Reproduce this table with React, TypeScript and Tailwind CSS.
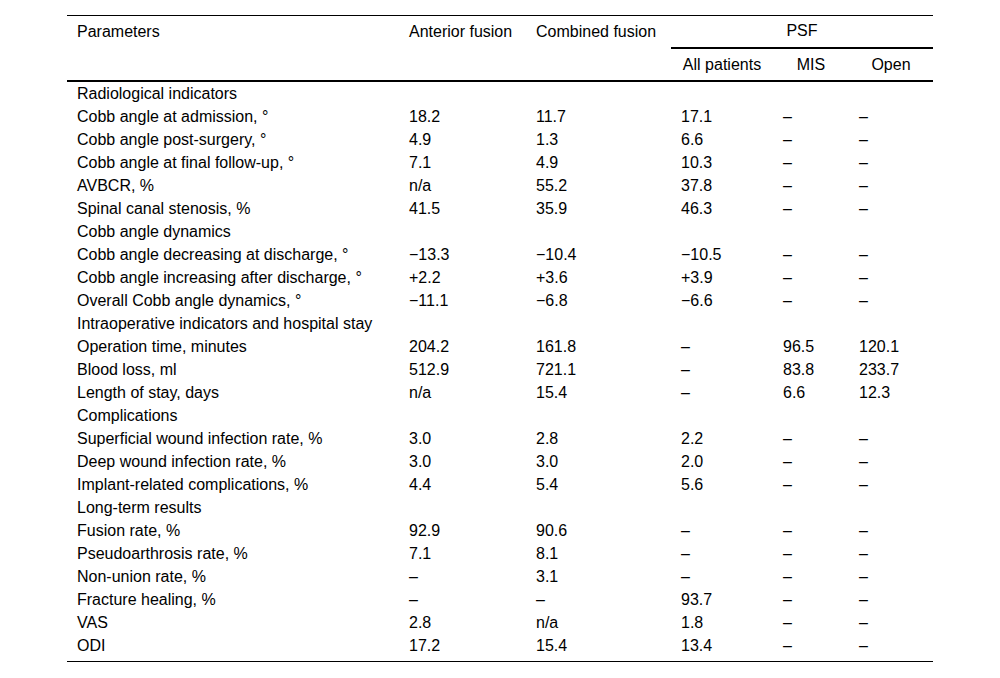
import React from "react";

// строки таблицы: [название, anterior, combined, all, mis, open] или заголовок раздела
type Row = { section: string } | { cells: string[] };

const rows: Row[] = [
  { section: "Radiological indicators" },
  { cells: ["Cobb angle at admission, °", "18.2", "11.7", "17.1", "–", "–"] },
  { cells: ["Cobb angle post-surgery, °", "4.9", "1.3", "6.6", "–", "–"] },
  { cells: ["Cobb angle at final follow-up, °", "7.1", "4.9", "10.3", "–", "–"] },
  { cells: ["AVBCR, %", "n/a", "55.2", "37.8", "–", "–"] },
  { cells: ["Spinal canal stenosis, %", "41.5", "35.9", "46.3", "–", "–"] },
  { section: "Cobb angle dynamics" },
  { cells: ["Cobb angle decreasing at discharge, °", "−13.3", "−10.4", "−10.5", "–", "–"] },
  { cells: ["Cobb angle increasing after discharge, °", "+2.2", "+3.6", "+3.9", "–", "–"] },
  { cells: ["Overall Cobb angle dynamics, °", "−11.1", "−6.8", "−6.6", "–", "–"] },
  { section: "Intraoperative indicators and hospital stay" },
  { cells: ["Operation time, minutes", "204.2", "161.8", "–", "96.5", "120.1"] },
  { cells: ["Blood loss, ml", "512.9", "721.1", "–", "83.8", "233.7"] },
  { cells: ["Length of stay, days", "n/a", "15.4", "–", "6.6", "12.3"] },
  { section: "Complications" },
  { cells: ["Superficial wound infection rate, %", "3.0", "2.8", "2.2", "–", "–"] },
  { cells: ["Deep wound infection rate, %", "3.0", "3.0", "2.0", "–", "–"] },
  { cells: ["Implant-related complications, %", "4.4", "5.4", "5.6", "–", "–"] },
  { section: "Long-term results" },
  { cells: ["Fusion rate, %", "92.9", "90.6", "–", "–", "–"] },
  { cells: ["Pseudoarthrosis rate, %", "7.1", "8.1", "–", "–", "–"] },
  { cells: ["Non-union rate, %", "–", "3.1", "–", "–", "–"] },
  { cells: ["Fracture healing, %", "–", "–", "93.7", "–", "–"] },
  { cells: ["VAS", "2.8", "n/a", "1.8", "–", "–"] },
  { cells: ["ODI", "17.2", "15.4", "13.4", "–", "–"] },
];

const grid = "grid grid-cols-[332px_127px_145px_102px_76px_84px]";

export default function App() {
  return (
    <div
      className="min-h-[678px] bg-white pt-[15px] pl-[67px] text-[16px] leading-[23px] text-black"
      style={{ fontFamily: '"Liberation Sans", Arial, sans-serif' }}
    >
      <div className="w-[866px] border-t border-b border-black">
        {/* шапка */}
        <div className={`${grid} border-b-2 border-black`}>
          <div className="row-span-2 pl-[10px] pt-[4px]">Parameters</div>
          <div className="row-span-2 pl-[10px] pt-[4px]">Anterior fusion</div>
          <div className="row-span-2 pl-[10px] pt-[4px]">Combined fusion</div>
          <div className="col-span-3 flex h-[33px] items-center justify-center border-b-2 border-black pb-[2px]">
            PSF
          </div>
          <div className="flex h-[31px] items-center justify-center">All patients</div>
          <div className="flex h-[31px] items-center justify-center">MIS</div>
          <div className="flex h-[31px] items-center justify-center">Open</div>
        </div>
        {/* тело */}
        <div className="pb-[4px]">
          {rows.map((r, i) =>
            "section" in r ? (
              <div key={i} className="flex h-[23px] items-center pl-[10px]">
                {r.section}
              </div>
            ) : (
              <div key={i} className={`${grid} h-[23px] items-center`}>
                {r.cells.map((c, j) => (
                  <div key={j} className="pl-[10px] whitespace-nowrap">
                    {c}
                  </div>
                ))}
              </div>
            )
          )}
        </div>
      </div>
    </div>
  );
}
